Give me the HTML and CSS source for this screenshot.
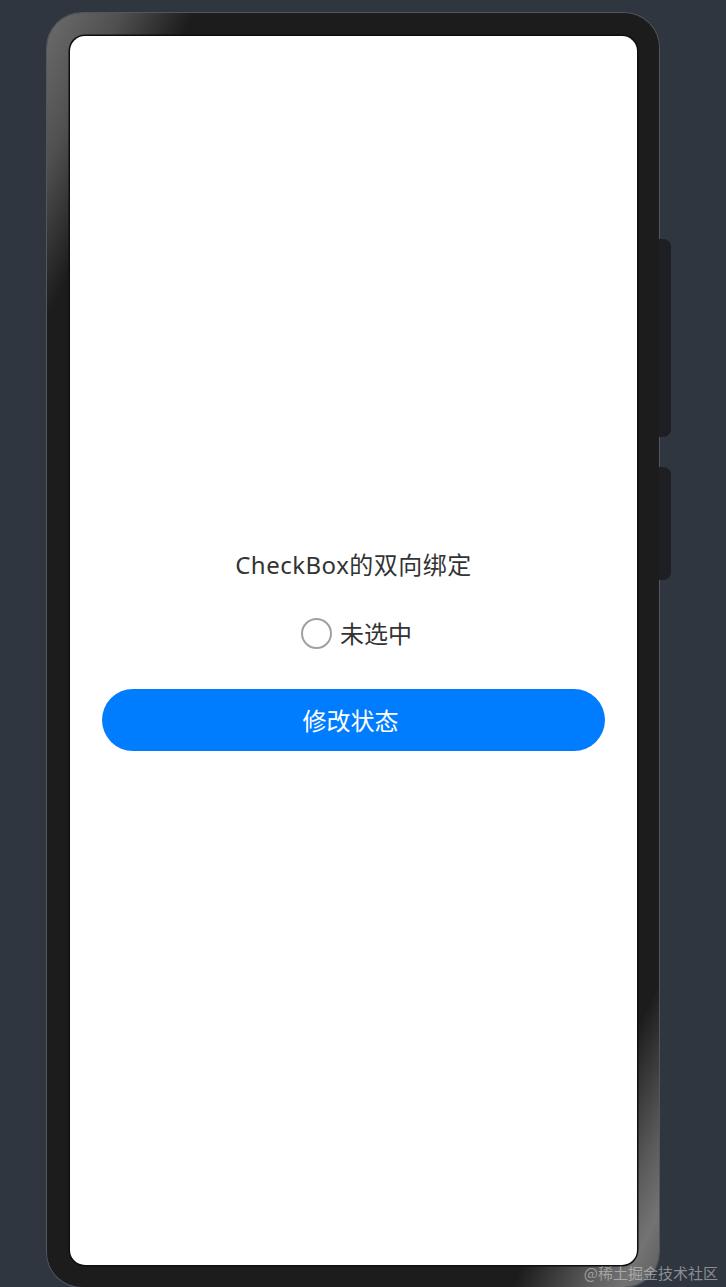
FILE: index.html
```html
<!DOCTYPE html>
<html lang="zh">
<head>
<meta charset="utf-8">
<title>CheckBox的双向绑定</title>
<link rel="stylesheet" href="styles.css">
</head>
<body>
  <div class="phone">
    <div class="side-btn side-btn-power"></div>
    <div class="side-btn side-btn-volume"></div>
    <div class="screen">
      <div class="content">
        <div class="title">CheckBox的双向绑定</div>
        <label class="check-row">
          <span class="check-circle"></span>
          <span class="check-label">未选中</span>
        </label>
        <button class="action-btn" type="button">修改状态</button>
      </div>
    </div>
  </div>
  <div class="watermark">@稀土掘金技术社区</div>
</body>
</html>
```
FILE: styles.css
```css
html, body {
  margin: 0;
  padding: 0;
}
body {
  width: 726px;
  height: 1287px;
  overflow: hidden;
  background: #2f363f;
  position: relative;
  font-family: "Noto Sans", "Noto Sans CJK SC", sans-serif;
}
.phone {
  position: relative;
  box-sizing: border-box;
  margin: 13px 0 0 47px;
  width: 612px;
  height: 1274px;
  padding: 23px 22px 22px 23px;
  border-radius: 35px;
  background: linear-gradient(to bottom right,
    #6c6c6c 0%, #505050 6%, #1c1c1c 12%,
    #1c1c1c 88%, #5a5a5a 94%, #737373 97%, #5c5c5c 100%);
  box-shadow: 0 0 0 1px rgba(150, 150, 150, 0.35);
}
.side-btn {
  position: absolute;
  left: 612px;
  width: 12px;
  background: #1d1f23;
  border-radius: 0 8px 8px 0;
}
.side-btn-power {
  top: 226px;
  height: 198px;
}
.side-btn-volume {
  top: 454px;
  height: 113px;
}
.screen {
  height: 100%;
  background: #ffffff;
  border-radius: 15px;
  box-shadow: 0 0 0 1.5px #0f0f0f;
  display: flex;
  flex-direction: column;
  justify-content: center;
}
.content {
  display: flex;
  flex-direction: column;
  align-items: center;
  padding: 0 32px 0 32px;
}
.title {
  font-size: 24px;
  line-height: 32px;
  letter-spacing: 0.5px;
  color: #333333;
  margin-top: -2px;
}
.check-row {
  margin-top: 37px;
  margin-left: 6px;
  display: flex;
  align-items: center;
  gap: 8px;
  height: 32px;
}
.check-circle {
  box-sizing: border-box;
  width: 31px;
  height: 31px;
  border-radius: 50%;
  border: 2px solid #a0a0a0;
  background: #fff;
}
.check-label {
  font-size: 24px;
  line-height: 32px;
  color: #333333;
}
.action-btn {
  margin-top: 39px;
  align-self: stretch;
  height: 62px;
  border: none;
  border-radius: 31px;
  background: #007dff;
  color: #ffffff;
  font-family: "Noto Sans CJK SC", sans-serif;
  font-size: 24px;
  font-weight: 400;
  padding: 0 6px 0 0;
}
.watermark {
  position: absolute;
  right: 8px;
  bottom: 4px;
  font-family: "Noto Sans CJK SC", sans-serif;
  font-size: 15px;
  line-height: 20px;
  color: rgba(220, 220, 220, 0.55);
}
```
